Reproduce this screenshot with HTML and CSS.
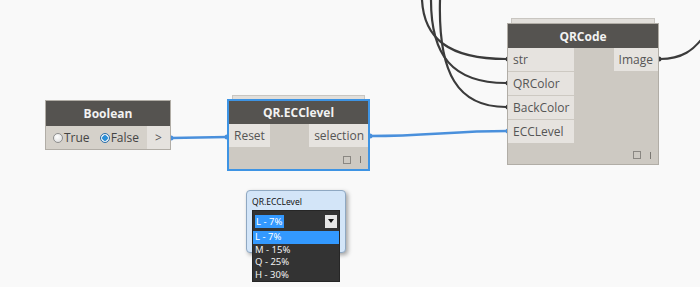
FILE: index.html
```html
<!DOCTYPE html>
<html>
<head>
<meta charset="utf-8">
<link rel="stylesheet" href="styles.css">
</head>
<body>
<div class="canvas">
  <svg class="wires" width="700" height="287" viewBox="0 0 700 287">
    <path class="wire dark" d="M422 0 C424 38 448 59 506 59"/>
    <path class="wire dark" d="M431 0 C431 55 452 83 506 83"/>
    <path class="wire dark" d="M440 0 C438 74 458 107 506 107"/>
    <path class="wire dark" d="M660 59 C682 59 694 50 704 36"/>
    <path class="wire blue" d="M171 138 L227 137"/>
    <path class="wire blue" d="M370 136 C430 136 450 131 508 131"/>
    <circle class="nub blue-f" cx="171" cy="138" r="2.5"/>
    <circle class="nub blue-f" cx="227" cy="137" r="2.5"/>
    <circle class="nub blue-f" cx="370" cy="136" r="2.5"/>
    <circle class="nub blue-f" cx="508" cy="131" r="2.5"/>
    <circle class="nub dark-f" cx="508" cy="59" r="2.5"/>
    <circle class="nub dark-f" cx="508" cy="83" r="2.5"/>
    <circle class="nub dark-f" cx="508" cy="107" r="2.5"/>
    <circle class="nub dark-f" cx="659" cy="59" r="2.5"/>
  </svg>

  <div class="node boolean">
    <div class="header">Boolean</div>
    <div class="bool-body">
      <div class="radios">
        <span class="radio"><span class="dot"></span>True</span>
        <span class="radio"><span class="dot on"></span>False</span>
      </div>
      <div class="out-port">&gt;</div>
    </div>
  </div>

  <div class="stack ecc-stack"></div>
  <div class="node ecc selected">
    <div class="header">QR.ECClevel</div>
    <div class="ports">
      <div class="in-col"><div class="port">Reset</div></div>
      <div class="out-col"><div class="port">selection</div></div>
    </div>
    <div class="footer"><span class="sq"></span><span class="bar"></span></div>
  </div>

  <div class="stack qr-stack"></div>
  <div class="node qr">
    <div class="header">QRCode</div>
    <div class="ports">
      <div class="in-col">
        <div class="port">str</div>
        <div class="port">QRColor</div>
        <div class="port">BackColor</div>
        <div class="port">ECCLevel</div>
      </div>
      <div class="out-col"><div class="port">Image</div></div>
    </div>
    <div class="footer"><span class="sq"></span><span class="bar"></span></div>
  </div>

  <div class="popup">
    <div class="popup-title">QR.ECCLevel</div>
    <div class="combo">
      <div class="combo-box">
        <span class="combo-val">L - 7%</span>
        <span class="combo-btn"><span class="tri"></span></span>
      </div>
      <ul class="list">
        <li class="hl">L - 7%</li>
        <li>M - 15%</li>
        <li>Q - 25%</li>
        <li>H - 30%</li>
      </ul>
    </div>
  </div>
</div>
</body>
</html>
```

FILE: styles.css
```css
html, body {
  margin: 0;
  padding: 0;
  background: #f9f9f9;
}
.canvas {
  position: relative;
  width: 700px;
  height: 287px;
  overflow: hidden;
  background: #f9f9f9;
  font-family: "Open Sans", "Noto Sans", sans-serif;
}
.wires {
  position: absolute;
  left: 0;
  top: 0;
  z-index: 1;
}
.wire {
  fill: none;
  stroke-width: 2.2;
}
.wire.dark { stroke: #3b3b3b; }
.wire.blue { stroke: #4a90dc; stroke-width: 2.4; }
.nub.blue-f { fill: #4a90dc; }
.nub.dark-f { fill: #3b3b3b; }

.node {
  position: absolute;
  z-index: 2;
  box-sizing: border-box;
  background: #cdc9c2;
  border: 1px solid #b1ada6;
  display: flex;
  flex-direction: column;
}
.header {
  background: #555350;
  color: #f2f2f2;
  font-weight: 700;
  font-size: 12px;
  text-align: center;
  display: flex;
  align-items: center;
  justify-content: center;
}

/* Boolean */
.boolean {
  left: 45px;
  top: 100px;
  width: 126px;
  height: 50px;
}
.boolean .header { height: 25px; }
.bool-body {
  flex: 1;
  display: flex;
  background: #d5d1ca;
}
.radios {
  flex: 1;
  display: flex;
  align-items: center;
  gap: 10px;
  padding-left: 7px;
  font-size: 12px;
  color: #444;
}
.radio {
  display: flex;
  align-items: center;
}
.dot {
  width: 8px;
  height: 8px;
  border-radius: 50%;
  border: 1px solid #8e8e8e;
  background: radial-gradient(circle at 40% 35%, #ffffff, #d8d8d8);
  margin-right: 1px;
  box-sizing: content-box;
}
.dot.on {
  background: radial-gradient(circle, #2a8fd8 0 2.5px, #e8eef4 3px);
  border-color: #2c6fa8;
}
.out-port {
  width: 23px;
  background: #e5e2de;
  color: #555;
  font-size: 12px;
  display: flex;
  align-items: center;
  justify-content: center;
}

/* stacks */
.stack {
  position: absolute;
  z-index: 1;
  box-sizing: border-box;
  border: 1px solid #c9c6c1;
  border-bottom: none;
  background: #e2dfdb;
}
.ecc-stack {
  left: 232px;
  top: 95px;
  width: 133px;
  height: 6px;
}
.qr-stack {
  left: 511px;
  top: 18px;
  width: 144px;
  height: 6px;
}

/* ECC node */
.ecc {
  left: 227px;
  top: 99px;
  width: 143px;
  height: 72px;
}
.selected {
  border: 2px solid #3e94e4;
}
.ecc .header { height: 23px; }
.ports {
  display: flex;
  justify-content: space-between;
}
.in-col, .out-col {
  display: flex;
  flex-direction: column;
  gap: 1px;
}
.port {
  background: #e6e3df;
  color: #555;
  font-size: 12px;
  height: 23px;
  display: flex;
  align-items: center;
  padding: 0 5px;
}
.ecc .in-col .port { width: 31px; }
.ecc .out-col .port { padding: 0 4px 0 5px; }
.footer {
  flex: 1;
  display: flex;
  justify-content: flex-end;
  align-items: center;
  gap: 9px;
  padding: 3px 7px 0 0;
}
.sq {
  width: 6px;
  height: 6px;
  border: 1px solid #8a8782;
}
.bar {
  width: 1px;
  height: 7px;
  background: #7a7772;
}

/* QRCode */
.qr {
  left: 507px;
  top: 23px;
  width: 152px;
  height: 142px;
}
.qr .header { height: 24px; }
.qr .in-col .port { width: 56px; }
.qr .out-col .port { padding: 0 5px 0 5px; }

/* popup */
.popup {
  position: absolute;
  z-index: 3;
  left: 246px;
  top: 190px;
  width: 100px;
  height: 63px;
  box-sizing: border-box;
  background: #d3e5f8;
  border: 1px solid #8fa8c2;
  border-radius: 4px;
  box-shadow: 2px 2px 4px rgba(0,0,0,0.35);
  padding: 5px 0 0 5px;
}
.popup-title {
  font-family: "Noto Sans", "Open Sans", sans-serif;
  font-size: 8.5px;
  color: #111;
  height: 14px;
  line-height: 12px;
  white-space: nowrap;
}
.combo {
  width: 88px;
  background: #333;
  border: 1px solid #262626;
  box-sizing: border-box;
}
.combo-box {
  display: flex;
  align-items: center;
  justify-content: space-between;
  height: 20px;
  padding: 0 2px;
}
.combo-val {
  background: #3399ff;
  color: #fff;
  font-size: 9.5px;
  line-height: 13px;
  padding: 0 2px 0 1px;
  white-space: nowrap;
  font-family: "Noto Sans", "Open Sans", sans-serif;
}
.combo-btn {
  width: 12px;
  height: 13px;
  background: #e6e6e6;
  display: flex;
  align-items: center;
  justify-content: center;
}
.tri {
  width: 0;
  height: 0;
  border-left: 3px solid transparent;
  border-right: 3px solid transparent;
  border-top: 4px solid #111;
}
.list {
  list-style: none;
  margin: 0;
  padding: 0;
  font-family: "Noto Sans", "Open Sans", sans-serif;
  font-size: 9.5px;
  color: #f0f0f0;
}
.list li {
  height: 12.5px;
  line-height: 12.5px;
  padding-left: 2px;
  white-space: nowrap;
}
.list li.hl {
  background: #3399ff;
  color: #fff;
}
```
